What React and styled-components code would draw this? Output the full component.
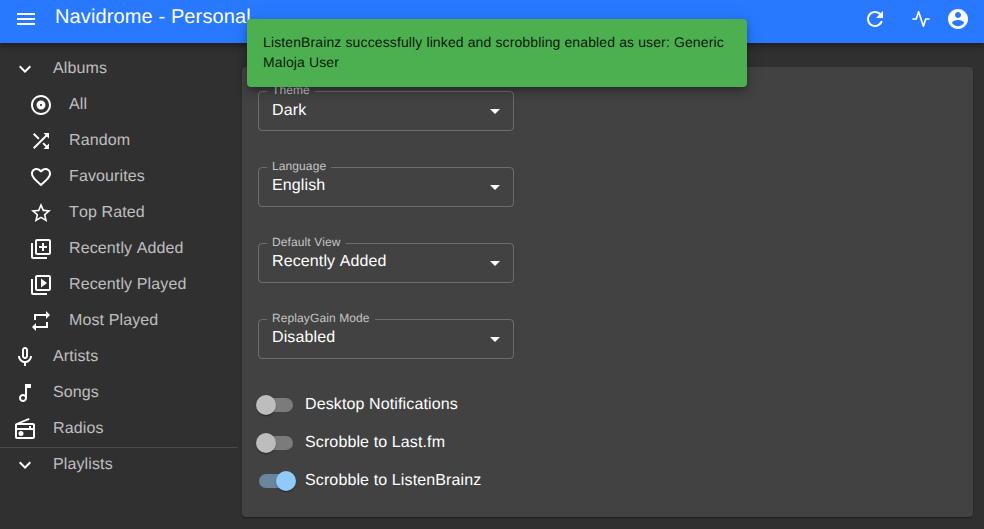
import React from "react";
import styled, { createGlobalStyle } from "styled-components";

const Global = createGlobalStyle`
  html, body { margin: 0; padding: 0; height: 100%; background: #303030; }
  body { font-family: "Liberation Sans", Arial, sans-serif; overflow: hidden; text-rendering: geometricPrecision; font-kerning: none; }
  #root { height: 100%; }
`;

const Page = styled.div`
  position: relative;
  display: flex;
  flex-direction: column;
  width: 984px;
  height: 529px;
  overflow: hidden;
  background: #303030;
  color: #fff;
`;

const AppBar = styled.header`
  position: relative;
  z-index: 2;
  flex: none;
  display: flex;
  align-items: center;
  height: 43px;
  padding: 0 14px;
  box-sizing: border-box;
  background: #2979ff;
  box-shadow: 0 2px 4px -1px rgba(0,0,0,.2), 0 4px 5px 0 rgba(0,0,0,.14), 0 1px 10px 0 rgba(0,0,0,.12);
`;

const Title = styled.h1`
  flex: 1;
  margin: 0 0 0 17px;
  font-size: 20px;
  font-weight: 400;
  line-height: 32px;
  letter-spacing: 0.12px;
  position: relative;
  top: -5px;
`;

const BarActions = styled.div`
  display: flex;
  align-items: center;
`;

const BarIcon = styled.span`
  display: flex;
  margin-left: ${(p) => p.$gap || 0}px;
  position: relative;
  top: -3px;
`;

const Body = styled.div`
  flex: 1;
  display: flex;
  min-height: 0;
`;

const Sidebar = styled.nav`
  flex: none;
  width: 238px;
  padding-top: 8px;
  margin-right: 4px;
`;

const NavRow = styled.div`
  display: flex;
  align-items: center;
  height: 36px;
  padding-left: ${(p) => (p.$sub ? 29 : 13)}px;
  color: rgba(255,255,255,.7);
  font-size: 16px;
  letter-spacing: 0.12px;
  svg { flex: none; margin-right: 16px; color: #fff; }
`;

const Divider = styled.hr`
  margin: 0 0 -1px;
  border: 0;
  border-top: 1px solid rgba(255,255,255,.12);
`;

const Card = styled.main`
  flex: none;
  width: 731px;
  height: 450px;
  margin-top: 24px;
  padding: 18px 16px 0;
  box-sizing: border-box;
  background: #424242;
  border-radius: 4px;
  box-shadow: 0 2px 1px -1px rgba(0,0,0,.2), 0 1px 1px 0 rgba(0,0,0,.14), 0 1px 3px 0 rgba(0,0,0,.12);
`;

const SelectBox = styled.fieldset`
  display: block;
  width: 256px;
  height: 46px;
  margin: 0 0 30px;
  padding: 0 6px 0 13px;
  box-sizing: border-box;
  border: 1px solid rgba(255,255,255,.23);
  border-radius: 4px;
`;

const Legend = styled.legend`
  position: relative;
  top: -1px;
  margin-left: -5px;
  padding: 0 5px;
  font-size: 12px;
  line-height: 12px;
  letter-spacing: 0.1px;
  color: rgba(255,255,255,.7);
`;

const SelectRow = styled.div`
  display: flex;
  align-items: center;
  justify-content: space-between;
  height: 26px;
  font-size: 16px;
  letter-spacing: 0.12px;
  color: #fff;
  svg { position: relative; top: 1px; }
`;

const SelectValue = styled.span`
  position: relative;
  top: ${(p) => p.$nudge || 0}px;
`;

const SwitchList = styled.div`
  display: flex;
  flex-direction: column;
  margin-top: -3px;
`;

const SwitchRow = styled.label`
  display: flex;
  align-items: center;
  height: 38px;
  font-size: 16px;
  letter-spacing: 0.12px;
  color: #fff;
`;

const Track = styled.span`
  position: relative;
  flex: none;
  width: 34px;
  height: 14px;
  margin: 0 12px 0 1px;
  border-radius: 7px;
  background: ${(p) => (p.$on ? "rgba(144,202,249,.5)" : "rgba(255,255,255,.3)")};
`;

const Thumb = styled.span`
  position: absolute;
  top: -3px;
  left: ${(p) => (p.$on ? 17 : -3)}px;
  width: 20px;
  height: 20px;
  border-radius: 50%;
  background: ${(p) => (p.$on ? "#90caf9" : "#bdbdbd")};
  box-shadow: 0 2px 1px -1px rgba(0,0,0,.2), 0 1px 1px 0 rgba(0,0,0,.14), 0 1px 3px 0 rgba(0,0,0,.12);
`;

const Toast = styled.div`
  position: absolute;
  z-index: 3;
  left: 247px;
  top: 19px;
  width: 500px;
  height: 68px;
  padding: 13px 16px;
  box-sizing: border-box;
  background: #4caf50;
  border-radius: 4px;
  color: rgba(0,0,0,.87);
  font-size: 14px;
  line-height: 20px;
  letter-spacing: 0.12px;
  box-shadow: 0 3px 5px -1px rgba(0,0,0,.2), 0 6px 10px 0 rgba(0,0,0,.14), 0 1px 18px 0 rgba(0,0,0,.12);
`;

const Icon = ({ d, children, size = 24 }) => (
  <svg width={size} height={size} viewBox="0 0 24 24" fill="currentColor" aria-hidden="true">
    {d && <path d={d} />}
    {children}
  </svg>
);

const P = {
  menu: "M3 18h18v-2H3v2zm0-5h18v-2H3v2zm0-7v2h18V6H3z",
  expand: "M16.59 8.59L12 13.17 7.41 8.59 6 10l6 6 6-6z",
  album: "M12 2C6.48 2 2 6.48 2 12s4.48 10 10 10 10-4.48 10-10S17.52 2 12 2zm0 18c-4.41 0-8-3.59-8-8s3.59-8 8-8 8 3.59 8 8-3.59 8-8 8zm0-12.5c-2.49 0-4.5 2.01-4.5 4.5s2.01 4.5 4.5 4.5 4.5-2.01 4.5-4.5-2.01-4.5-4.5-4.5zm0 5.5c-.55 0-1-.45-1-1s.45-1 1-1 1 .45 1 1-.45 1-1 1z",
  shuffle: "M10.59 9.17L5.41 4 4 5.41l5.17 5.17 1.42-1.41zM14.5 4l2.04 2.04L4 18.59 5.41 20 17.96 7.46 20 9.5V4h-5.5zm.33 9.41l-1.41 1.41 3.13 3.13L14.5 20H20v-5.5l-2.04 2.04-3.13-3.13z",
  heart: "M16.5 3c-1.74 0-3.41.81-4.5 2.09C10.91 3.81 9.24 3 7.5 3 4.42 3 2 5.42 2 8.5c0 3.78 3.4 6.86 8.55 11.54L12 21.35l1.45-1.32C18.6 15.36 22 12.28 22 8.5 22 5.42 19.58 3 16.5 3zm-4.4 15.55l-.1.1-.1-.1C7.14 14.24 4 11.39 4 8.5 4 6.5 5.5 5 7.5 5c1.54 0 3.04.99 3.57 2.36h1.87C13.46 5.99 14.96 5 16.5 5c2 0 3.5 1.5 3.5 3.5 0 2.89-3.14 5.74-7.9 10.05z",
  star: "M22 9.24l-7.19-.62L12 2 9.19 8.63 2 9.24l5.46 4.73L5.82 21 12 17.27 18.18 21l-1.63-7.03L22 9.24zM12 15.4l-3.76 2.27 1-4.28-3.32-2.88 4.38-.38L12 6.1l1.71 4.04 4.38.38-3.32 2.88 1 4.28L12 15.4z",
  add: "M4 6H2v14c0 1.1.9 2 2 2h14v-2H4V6zm16-4H8c-1.1 0-2 .9-2 2v12c0 1.1.9 2 2 2h12c1.1 0 2-.9 2-2V4c0-1.1-.9-2-2-2zm0 14H8V4h12v12zm-7-2h2v-3h3V9h-3V6h-2v3h-3v2h3z",
  play: "M4 6H2v14c0 1.1.9 2 2 2h14v-2H4V6zm16-4H8c-1.1 0-2 .9-2 2v12c0 1.1.9 2 2 2h12c1.1 0 2-.9 2-2V4c0-1.1-.9-2-2-2zm0 14H8V4h12v12zM12 5.5v9l6-4.5z",
  repeat: "M7 7h10v3l4-4-4-4v3H5v6h2V7zm10 10H7v-3l-4 4 4 4v-3h12v-6h-2v4z",
  mic: "M12 14c1.66 0 3-1.34 3-3V5c0-1.66-1.34-3-3-3S9 3.34 9 5v6c0 1.66 1.34 3 3 3zm-1-9c0-.55.45-1 1-1s1 .45 1 1v6c0 .55-.45 1-1 1s-1-.45-1-1V5zm6 6c0 2.76-2.24 5-5 5s-5-2.24-5-5H5c0 3.53 2.61 6.43 6 6.92V21h2v-3.08c3.39-.49 6-3.39 6-6.92h-2z",
  note: "M12 3l.01 10.55c-.59-.34-1.27-.55-2-.55C7.79 13 6 14.79 6 17s1.79 4 4.01 4S14 19.21 14 17V7h4V3h-6zm-1.99 16c-1.1 0-2-.9-2-2s.9-2 2-2 2 .9 2 2-.9 2-2 2z",
  radio: "M20 6H8.3l8.26-3.34L15.88 1 3.24 6.15C2.51 6.43 2 7.17 2 8v12c0 1.1.89 2 2 2h16c1.11 0 2-.9 2-2V8c0-1.11-.89-2-2-2zm0 2v3h-2V9h-2v2H4V8h16zM4 20v-7h16v7H4z",
  refresh: "M17.65 6.35C16.2 4.9 14.21 4 12 4c-4.42 0-7.99 3.58-7.99 8s3.57 8 7.99 8c3.73 0 6.84-2.55 7.73-6h-2.08c-.82 2.33-3.04 4-5.65 4-3.31 0-6-2.69-6-6s2.69-6 6-6c1.66 0 3.14.69 4.22 1.78L13 11h7V4l-2.35 2.35z",
  account: "M12 2C6.48 2 2 6.48 2 12s4.48 10 10 10 10-4.48 10-10S17.52 2 12 2zm0 3c1.66 0 3 1.34 3 3s-1.34 3-3 3-3-1.34-3-3 1.34-3 3-3zm0 14.2c-2.5 0-4.71-1.28-6-3.22.03-1.99 4-3.08 6-3.08 1.99 0 5.97 1.09 6 3.08-1.29 1.94-3.5 3.22-6 3.22z",
  drop: "M7 10l5 5 5-5z",
};

const albums = [
  ["All", P.album],
  ["Random", P.shuffle],
  ["Favourites", P.heart],
  ["Top Rated", P.star],
  ["Recently Added", P.add],
  ["Recently Played", P.play],
  ["Most Played", P.repeat],
];

const selects = [
  ["Theme", "Dark", 1],
  ["Language", "English", 0],
  ["Default View", "Recently Added", 0],
  ["ReplayGain Mode", "Disabled", 0],
];

const switches = [
  ["Desktop Notifications", false],
  ["Scrobble to Last.fm", false],
  ["Scrobble to ListenBrainz", true],
];

export default function App() {
  return (
    <Page>
      <Global />
      <AppBar>
        <BarIcon><Icon d={P.menu} /></BarIcon>
        <Title>Navidrome - Personal</Title>
        <BarActions>
          <BarIcon><Icon d={P.refresh} /></BarIcon>
          <BarIcon $gap={22}>
            <svg width="24" height="24" viewBox="0 0 24 24" fill="none" stroke="currentColor" aria-hidden="true">
              <polyline points="22 12 18 12 15 21 9 3 6 12 2 12" transform="translate(2.4 2.4) scale(.8)" strokeLinecap="round" strokeLinejoin="round" strokeWidth="2.1" />
            </svg>
          </BarIcon>
          <BarIcon $gap={13}><Icon d={P.account} /></BarIcon>
        </BarActions>
      </AppBar>
      <Body>
        <Sidebar>
          <NavRow><Icon d={P.expand} />Albums</NavRow>
          {albums.map(([label, d]) => (
            <NavRow $sub key={label}><Icon d={d} />{label}</NavRow>
          ))}
          <NavRow><Icon d={P.mic} />Artists</NavRow>
          <NavRow><Icon d={P.note} />Songs</NavRow>
          <NavRow>
            <Icon d={P.radio}><circle cx="8" cy="16.48" r="2.5" /></Icon>
            Radios
          </NavRow>
          <Divider />
          <NavRow><Icon d={P.expand} />Playlists</NavRow>
        </Sidebar>
        <Card>
          {selects.map(([label, value, nudge]) => (
            <SelectBox key={label}>
              <Legend>{label}</Legend>
              <SelectRow>
                <SelectValue $nudge={nudge}>{value}</SelectValue>
                <Icon d={P.drop} />
              </SelectRow>
            </SelectBox>
          ))}
          <SwitchList>
            {switches.map(([label, on]) => (
              <SwitchRow key={label}>
                <Track $on={on}><Thumb $on={on} /></Track>
                <span>{label}</span>
              </SwitchRow>
            ))}
          </SwitchList>
        </Card>
      </Body>
      <Toast>ListenBrainz successfully linked and scrobbling enabled as user: Generic Maloja User</Toast>
    </Page>
  );
}
